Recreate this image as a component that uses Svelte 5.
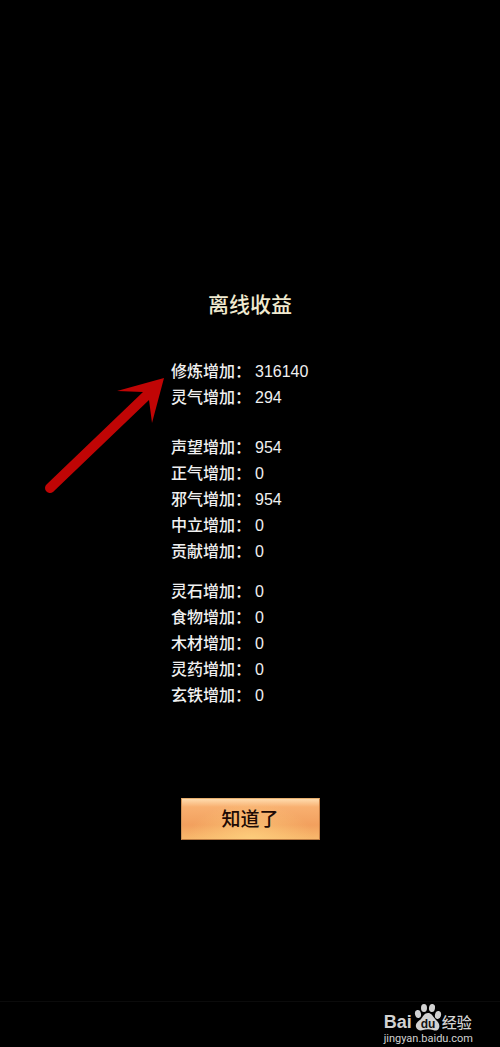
<script lang="ts">
  type Gain = { name: string; value: number }

  export let groups: Gain[][] = [
    [
      { name: '修炼', value: 316140 },
      { name: '灵气', value: 294 }
    ],
    [
      { name: '声望', value: 954 },
      { name: '正气', value: 0 },
      { name: '邪气', value: 954 },
      { name: '中立', value: 0 },
      { name: '贡献', value: 0 }
    ],
    [
      { name: '灵石', value: 0 },
      { name: '食物', value: 0 },
      { name: '木材', value: 0 },
      { name: '灵药', value: 0 },
      { name: '玄铁', value: 0 }
    ]
  ]
  export let onConfirm: () => void = () => {}
</script>

<div class="screen" lang="zh-CN">
  <main class="report">
    <h1>离线收益</h1>

    <div class="gains">
      {#each groups as group}
        <dl>
          {#each group as gain (gain.name)}
            <div class="row">
              <dt>{gain.name}增加：</dt>
              <dd>{gain.value}</dd>
            </div>
          {/each}
        </dl>
      {/each}

      <svg class="arrow" viewBox="0 0 120 118" aria-hidden="true">
        <path
          d="M1 106 L97 14 L71 13 L118 0 L106 45 L103 22 L7 114 A5 5 0 0 1 1 106 Z"
          fill="#c00505"
        />
      </svg>
    </div>

    <button type="button" onclick={onConfirm}>知道了</button>
  </main>

  <footer>
    <div class="watermark">
      <div class="brand">
        <span class="latin">Bai</span>
        <svg class="paw" viewBox="0 0 28 28" aria-hidden="true">
          <g fill="#d2d2d2">
            <ellipse cx="4" cy="11" rx="3" ry="4" transform="rotate(-12 4 11)" />
            <ellipse cx="10" cy="5" rx="3" ry="4" />
            <ellipse cx="18" cy="5" rx="3" ry="4" transform="rotate(8 18 5)" />
            <ellipse cx="24" cy="12" rx="3" ry="4" transform="rotate(14 24 12)" />
            <path
              d="M14 10 C18 10 19 14 22 17 C25 20 26 22 25 25 C24 28 21 28 19 27 C16 26 12 26 9 27 C6 28 3 27 2 24 C1 20 5 18 7 16 C9 14 10 10 14 10 Z"
            />
          </g>
          <text x="14" y="25" text-anchor="middle">du</text>
        </svg>
        <span class="cjk">经验</span>
      </div>
      <a href="https://jingyan.baidu.com">jingyan.baidu.com</a>
    </div>
  </footer>
</div>

<style>
  :global(body) {
    margin: 0;
    background: #000;
  }

  .screen {
    display: flex;
    flex-direction: column;
    box-sizing: border-box;
    min-height: 100vh;
    padding-top: 290px;
    background: #000;
    color: #f0f0f0;
    font-family: "Liberation Sans", "Noto Sans CJK SC", sans-serif;
  }

  .report {
    display: flex;
    flex-direction: column;
    align-items: center;
  }

  h1,
  dl,
  dd {
    margin: 0;
  }

  h1 {
    color: #f0ead0;
    font-size: 21px;
    font-weight: 500;
    line-height: 30px;
  }

  .gains {
    position: relative;
    display: grid;
    width: 158px;
    margin-top: 39px;
  }

  dl + dl {
    margin-top: 24px;
  }

  dl + dl + dl {
    margin-top: 14px;
  }

  .row {
    display: flex;
    gap: 4px;
    font-size: 16px;
    font-weight: 500;
    line-height: 26px;
  }

  .arrow {
    position: absolute;
    top: 19px;
    right: 100%;
    width: 120px;
    height: 118px;
    margin-right: 5px;
    overflow: visible;
  }

  button {
    width: 139px;
    height: 42px;
    margin-top: 89px;
    border: 1px solid;
    border-color: #e8b070 #c47c40 #b87840 #d09458;
    padding: 0 0 4px;
    background:
      radial-gradient(ellipse at 50% 100%, rgba(255, 214, 130, 0.7), transparent 65%),
      linear-gradient(#ffdcae, #f8b070 20%, #f2a05e 65%, #f8b86c);
    color: #200a04;
    font: 500 19px "Noto Sans CJK SC", sans-serif;
    cursor: pointer;
  }

  footer {
    display: flex;
    justify-content: flex-end;
    margin-top: auto;
    border-top: 1px solid #0b0b0b;
    padding: 0 27px 1px 0;
  }

  .watermark {
    display: grid;
    color: #d2d2d2;
  }

  .brand {
    display: flex;
    align-items: flex-end;
    height: 29px;
  }

  .latin {
    font-size: 18px;
    font-weight: 700;
    line-height: 18px;
  }

  .paw {
    width: 28px;
    height: 28px;
    margin-left: 2px;
  }

  .paw text {
    fill: #111;
    font-size: 12px;
    font-weight: 700;
  }

  .cjk {
    font-family: "Noto Sans CJK SC", sans-serif;
    font-size: 15px;
    font-weight: 500;
    line-height: 18px;
  }

  .watermark a {
    color: inherit;
    font-family: Roboto, sans-serif;
    font-size: 11px;
    line-height: 15px;
    text-decoration: none;
  }
</style>
